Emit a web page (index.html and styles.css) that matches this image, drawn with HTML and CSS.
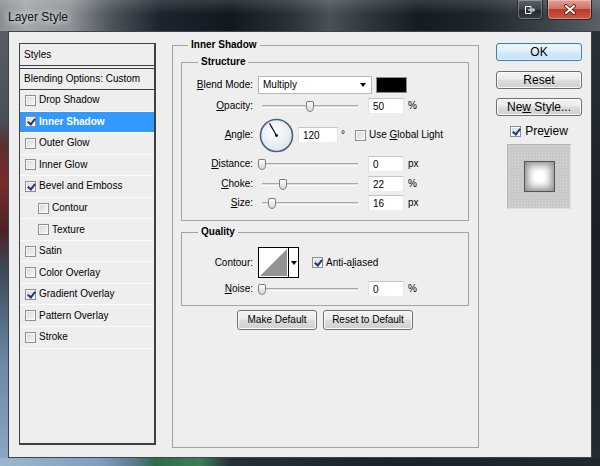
FILE: index.html
```html
<!DOCTYPE html>
<html lang="en">

<head>
  <meta charset="UTF-8" />
  <title>Layer Style</title>
  <link rel="stylesheet" href="styles.css">
</head>

<body>
  <div class="window">
    <div class="titlebar">
      <span class="title">Layer Style</span>
      <div class="caption-btns">
        <div class="cap-btn cap-restore">
          <svg width="12" height="10" viewBox="0 0 12 10">
            <path d="M1.5 1.5h5.5v7H1.5z" fill="none" stroke="#fff" />
            <path d="M4 5h6.5M8.5 3l2 2-2 2" fill="none" stroke="#fff" />
          </svg>
        </div>
        <div class="cap-btn cap-close">
          <svg width="14" height="11" viewBox="0 0 14 11">
            <path d="M3 2l8 7M11 2l-8 7" stroke="#4a0d06" stroke-width="3.6" stroke-linecap="round" />
            <path d="M3 2l8 7M11 2l-8 7" stroke="#fff" stroke-width="2.1" stroke-linecap="round" />
          </svg>
        </div>
      </div>
    </div>

    <div class="window-body">
      <div class="frame-left"></div>

      <div class="client">
        <!-- effects list -->
        <div class="styles-list">
          <div class="list-head">Styles</div>
          <div class="list-head list-blend">Blending Options: Custom</div>
          <ul class="fx-list">
            <li class="fx"><span class="cb"></span>Drop Shadow</li>
            <li class="fx active"><span class="cb on"></span>Inner Shadow</li>
            <li class="fx"><span class="cb"></span>Outer Glow</li>
            <li class="fx"><span class="cb"></span>Inner Glow</li>
            <li class="fx"><span class="cb on"></span>Bevel and Emboss</li>
            <li class="fx sub"><span class="cb"></span>Contour</li>
            <li class="fx sub"><span class="cb"></span>Texture</li>
            <li class="fx"><span class="cb"></span>Satin</li>
            <li class="fx"><span class="cb"></span>Color Overlay</li>
            <li class="fx"><span class="cb on"></span>Gradient Overlay</li>
            <li class="fx"><span class="cb"></span>Pattern Overlay</li>
            <li class="fx"><span class="cb"></span>Stroke</li>
          </ul>
        </div>

        <!-- settings -->
        <fieldset class="group group-main">
          <legend>Inner Shadow</legend>

          <fieldset class="group group-sub">
            <legend>Structure</legend>

            <div class="row row-blend">
              <label class="lbl"><u>B</u>lend Mode:</label>
              <div class="select"><span>Multiply</span><span class="arrow"></span></div>
              <span class="swatch"></span>
            </div>

            <div class="row row-slider row-opacity">
              <label class="lbl"><u>O</u>pacity:</label>
              <div class="slider"><div class="track"><span class="thumb" style="left: 50%"></span></div></div>
              <input class="num" type="text" value="50"><span class="unit">%</span>
            </div>

            <div class="row row-angle">
              <label class="lbl"><u>A</u>ngle:</label>
              <svg class="dial" width="35" height="35" viewBox="0 0 35 35">
                <defs>
                  <radialGradient id="dialFill" cx="45%" cy="40%" r="65%">
                    <stop offset="0" stop-color="#ffffff" />
                    <stop offset="1" stop-color="#dde2e8" />
                  </radialGradient>
                </defs>
                <circle cx="17.5" cy="17.5" r="16" fill="url(#dialFill)" stroke="#4b6082" stroke-width="1.6" />
                <line x1="17.5" y1="17.5" x2="10.5" y2="5.4" stroke="#111" stroke-width="1.2" />
                <circle cx="17.5" cy="17.5" r="1.4" fill="#000" />
              </svg>
              <input class="num num-angle" type="text" value="120"><span class="unit deg">°</span>
              <span class="cb cb-global"></span><span class="cb-text">Use <u>G</u>lobal Light</span>
            </div>

            <div class="row row-slider row-distance">
              <label class="lbl"><u>D</u>istance:</label>
              <div class="slider"><div class="track"><span class="thumb" style="left: 0%"></span></div></div>
              <input class="num" type="text" value="0"><span class="unit">px</span>
            </div>

            <div class="row row-slider row-choke">
              <label class="lbl"><u>C</u>hoke:</label>
              <div class="slider"><div class="track"><span class="thumb" style="left: 22%"></span></div></div>
              <input class="num" type="text" value="22"><span class="unit">%</span>
            </div>

            <div class="row row-slider row-size">
              <label class="lbl"><u>S</u>ize:</label>
              <div class="slider"><div class="track"><span class="thumb" style="left: 10.5%"></span></div></div>
              <input class="num" type="text" value="16"><span class="unit">px</span>
            </div>
          </fieldset>

          <fieldset class="group group-sub group-quality">
            <legend>Quality</legend>

            <div class="row row-contour">
              <label class="lbl">Contour:</label>
              <div class="contour">
                <svg class="contour-graph" width="29" height="29" viewBox="0 0 29 29">
                  <rect width="29" height="29" fill="#fff" />
                  <polygon points="1,28 28,1 28,28" fill="#939393" />
                </svg>
                <span class="contour-drop"><span class="arrow"></span></span>
              </div>
              <span class="cb on cb-anti"></span><span class="cb-text">Anti-a<u>l</u>iased</span>
            </div>

            <div class="row row-slider row-noise">
              <label class="lbl"><u>N</u>oise:</label>
              <div class="slider"><div class="track"><span class="thumb" style="left: 0%"></span></div></div>
              <input class="num" type="text" value="0"><span class="unit">%</span>
            </div>
          </fieldset>

          <div class="btn-row">
            <button class="btn btn-make">Make Default</button>
            <button class="btn btn-reset-default">Reset to Default</button>
          </div>
        </fieldset>

        <!-- dialog actions -->
        <div class="actions">
          <button class="btn btn-side btn-ok">OK</button>
          <button class="btn btn-side btn-reset">Reset</button>
          <button class="btn btn-side btn-new">Ne<u>w</u> Style...</button>
          <div class="preview-check"><span class="cb on"></span><span>Pre<u>v</u>iew</span></div>
          <div class="preview-box">
            <div class="preview-thumb"></div>
          </div>
        </div>
      </div>

      <div class="frame-right"></div>
    </div>

    <div class="frame-bottom"></div>
  </div>
</body>

</html>
```

FILE: styles.css
```css
:root {
  --color-client: #eeeeee;
  --color-line: #a3a3a3;
  --color-list-border: #404040;
  --color-select: #3399ff;
  --color-check: #1f3790;
  --font-ui: "Liberation Sans", Arial, sans-serif;
}

* {
  box-sizing: border-box;
  margin: 0;
  padding: 0;
}

body {
  background: #1c232b;
  font-family: var(--font-ui);
  color: #000;
}

/* window chrome */

.window {
  width: 600px;
  height: 466px;
  display: flex;
  flex-direction: column;
  overflow: hidden;
}

.titlebar {
  height: 31px;
  flex: none;
  display: flex;
  align-items: flex-start;
  background:
    linear-gradient(180deg, rgba(255, 255, 255, 0.14), rgba(255, 255, 255, 0) 45%),
    linear-gradient(90deg, #8b8f94 0, #a3a7ab 25px, #8f9398 70px, #4e555d 110px, #1d242d 160px,
      #121820 230px, #2b3139 290px, #4a5058 330px, #2e353d 370px, #151b23 420px,
      #1e252d 480px, #3a4047 540px, #5a6066 600px);
}

.title {
  margin: 10px 0 0 8px;
  font-size: 12px;
  line-height: 14px;
  color: #111;
  text-shadow: 0 0 6px rgba(255, 255, 255, 0.9), 0 0 10px rgba(255, 255, 255, 0.6);
}

.caption-btns {
  margin-left: auto;
  margin-right: 8px;
  display: flex;
  gap: 4px;
}

.cap-btn {
  height: 20px;
  display: flex;
  align-items: center;
  justify-content: center;
  border: 1px solid #23272c;
  border-top: none;
  border-radius: 0 0 4px 4px;
  box-shadow: inset 0 0 0 1px rgba(255, 255, 255, 0.3);
}

.cap-restore {
  width: 26px;
  background: linear-gradient(#5d636b, #3c424a 50%, #23292f 51%, #3a4048);
}

.cap-close {
  width: 45px;
  background: linear-gradient(#e2a096, #d07464 45%, #bf3a2a 50%, #c85a46);
}

.window-body {
  flex: 1;
  display: flex;
  min-height: 0;
}

.frame-left {
  width: 8px;
  background: linear-gradient(180deg, #5a5e64 0, #4a4f55 90px, #5c2f31 115px, #7a2b2b 150px,
      #4a2426 200px, #3d4a5a 240px, #6a87a6 330px, #8aa6c4 427px);
}

.frame-right {
  width: 8px;
  background: linear-gradient(180deg, #2a3037 0, #1b2027 200px, #252b33 427px);
}

.frame-bottom {
  height: 8px;
  flex: none;
  background: linear-gradient(90deg, #9db7d1 0, #7f9ebe 100px, #5a7a8e 135px, #2f6b4a 155px,
      #3c7e56 200px, #24303a 230px, #1a222b 400px, #20272f 600px);
}

.client {
  flex: 1;
  display: flex;
  align-items: flex-start;
  padding: 6px 0 0 10px;
  background: var(--color-client);
  border: 1px solid #3b434d;
  font-size: 10px;
  line-height: 14px;
}

/* effects list */

.styles-list {
  width: 137px;
  height: 402px;
  margin-top: 5px;
  flex: none;
  border: 1px solid var(--color-list-border);
  border-right-width: 2px;
  border-bottom-width: 2px;
  background: var(--color-client);
}

.list-head {
  height: 22px;
  padding-left: 4px;
  line-height: 21px;
  border-bottom: 1px solid var(--color-list-border);
}

.list-blend {
  margin-top: 2px;
  border-top: 1px solid var(--color-list-border);
  line-height: 20px;
}

.fx-list {
  list-style: none;
}

.fx {
  height: 21.55px;
  display: flex;
  align-items: center;
  padding-left: 5px;
  border-bottom: 1px solid #fbfbfb;
}

.fx.sub {
  padding-left: 18px;
}

.fx.active {
  background: var(--color-select);
  color: #fff;
  font-weight: bold;
}

/* checkbox */

.cb {
  position: relative;
  width: 11px;
  height: 11px;
  flex: none;
  margin-right: 3px;
  border: 1px solid #8e8f8f;
  background: linear-gradient(135deg, #d3d6da, #f8f8f8);
  box-shadow: inset 0 0 0 1px #f6f6f6;
}

.cb.on::after {
  content: "";
  position: absolute;
  left: 3px;
  top: 0;
  width: 3px;
  height: 6px;
  border: solid var(--color-check);
  border-width: 0 2px 2px 0;
  transform: rotate(38deg);
}

.cb-text {
  white-space: nowrap;
}

/* group boxes */

.group {
  border: 1px solid var(--color-line);
  min-width: 0;
}

.group legend {
  padding: 0 3px;
  font-weight: bold;
  line-height: 14px;
}

.group-main {
  width: 307px;
  height: 410px;
  margin-left: 16px;
  padding: 3px 9px 0 8px;
}

.group-main > legend {
  margin-left: 7px;
}

.group-sub {
  padding: 0 0 9px;
}

.group-sub > legend {
  margin-left: 16px;
}

.group-quality {
  margin-top: 4px;
  padding-bottom: 8px;
}

.row {
  display: flex;
  align-items: center;
  height: 16px;
  white-space: nowrap;
}

.lbl {
  width: 71px;
  margin-right: 5px;
  flex: none;
  text-align: right;
}

.row-blend {
  height: 18px;
  margin-top: 7px;
}

.row-opacity {
  margin-top: 4px;
}

.row-angle {
  height: 34px;
  margin-top: 4px;
}

.row-distance {
  margin-top: 4px;
}

.row-choke {
  margin-top: 4px;
}

.row-size {
  margin-top: 3px;
}

.row-contour {
  height: 31px;
  margin-top: 8px;
}

.row-noise {
  margin-top: 3px;
}

.select {
  width: 114px;
  height: 18px;
  display: flex;
  align-items: center;
  padding-left: 4px;
  background: #fff;
  border: 1px solid #b4b7bd;
}

.arrow {
  width: 0;
  height: 0;
  border-left: 3.5px solid transparent;
  border-right: 3.5px solid transparent;
  border-top: 4px solid #000;
}

.select .arrow {
  margin-left: auto;
  margin-right: 5px;
}

.swatch {
  width: 31px;
  height: 16px;
  margin-left: 4px;
  background: #000;
  border: 1px solid #8a8a8a;
}

.slider {
  width: 104px;
  height: 16px;
  padding: 0 4px;
  display: flex;
  align-items: center;
}

.track {
  position: relative;
  width: 100%;
  height: 3px;
  border-top: 1px solid #a9a9a9;
  border-bottom: 1px solid #fdfdfd;
  background: #dcdcdc;
}

.thumb {
  position: absolute;
  top: -5px;
  width: 8px;
  height: 11px;
  transform: translateX(-50%);
  border: 1px solid #7c7c7c;
  border-radius: 2px 2px 4px 4px / 2px 2px 5px 5px;
  background: linear-gradient(#fdfdfd, #d6d6d6);
}

.num {
  width: 36px;
  height: 16px;
  margin-left: 6px;
  padding: 0 4px;
  font: inherit;
  color: #000;
  background: #fff;
  border: 1px solid;
  border-color: #c2c4c9 #e3e6ea #eceef1 #dfe1e5;
  outline: none;
}

.unit {
  margin-left: 4px;
}

.dial {
  flex: none;
  margin-left: 1px;
}

.num-angle {
  width: 40px;
  margin-left: 4px;
}

.deg {
  margin-left: 3px;
}

.cb-global {
  margin-left: 10px;
}

.contour {
  display: flex;
  width: 41px;
  height: 31px;
  border: 1px solid #000;
  background: #fff;
}

.contour-drop {
  flex: 1;
  display: flex;
  align-items: center;
  justify-content: center;
  border-left: 1px solid #000;
}

.cb-anti {
  margin-left: 13px;
}

/* buttons */

.btn {
  font: inherit;
  color: #000;
  border: 1px solid #707070;
  border-radius: 3px;
  background: linear-gradient(#f3f3f3, #ebebeb 45%, #dddddd 50%, #cfcfcf);
  box-shadow: inset 0 0 0 1px #fbfbfb;
}

.btn-row {
  display: flex;
  justify-content: center;
  gap: 6px;
  margin-top: 4px;
}

.btn-make {
  width: 80px;
  height: 20px;
}

.btn-reset-default {
  width: 90px;
  height: 20px;
}

.actions {
  width: 86px;
  margin: 5px 0 0 17px;
  flex: none;
  display: flex;
  flex-direction: column;
  align-items: center;
  font-size: 12px;
}

.btn-side {
  width: 86px;
  height: 18px;
  font-size: 12px;
  line-height: 14px;
}

.btn-ok {
  border-color: #3c7fb1;
  background: linear-gradient(#f0f8fd, #e2f1fb 45%, #d3eaf8 50%, #c4e2f5);
  box-shadow: inset 0 0 0 1px #dff3fe;
}

.btn-reset {
  margin-top: 10px;
}

.btn-new {
  margin-top: 9px;
}

.preview-check {
  display: flex;
  align-items: center;
  height: 13px;
  margin-top: 9px;
  line-height: 13px;
}

.preview-check .cb {
  margin-right: 4px;
}

.preview-box {
  width: 64px;
  height: 65px;
  margin-top: 6px;
  display: flex;
  align-items: center;
  justify-content: center;
  background-color: #c9c9c9;
  background-image: radial-gradient(#d8d8d8 0.7px, transparent 1px);
  background-size: 3px 3px;
  border: 1px solid;
  border-color: #b5b5b5 #e0e0e0 #e0e0e0 #b5b5b5;
}

.preview-thumb {
  width: 31px;
  height: 31px;
  border: 1px solid #555;
  background: radial-gradient(closest-side, #ffffff 30%, #f2f2f2 60%, #e0e0e0 100%);
  box-shadow: inset 0 0 7px 2px #8c8c8c;
}
```
